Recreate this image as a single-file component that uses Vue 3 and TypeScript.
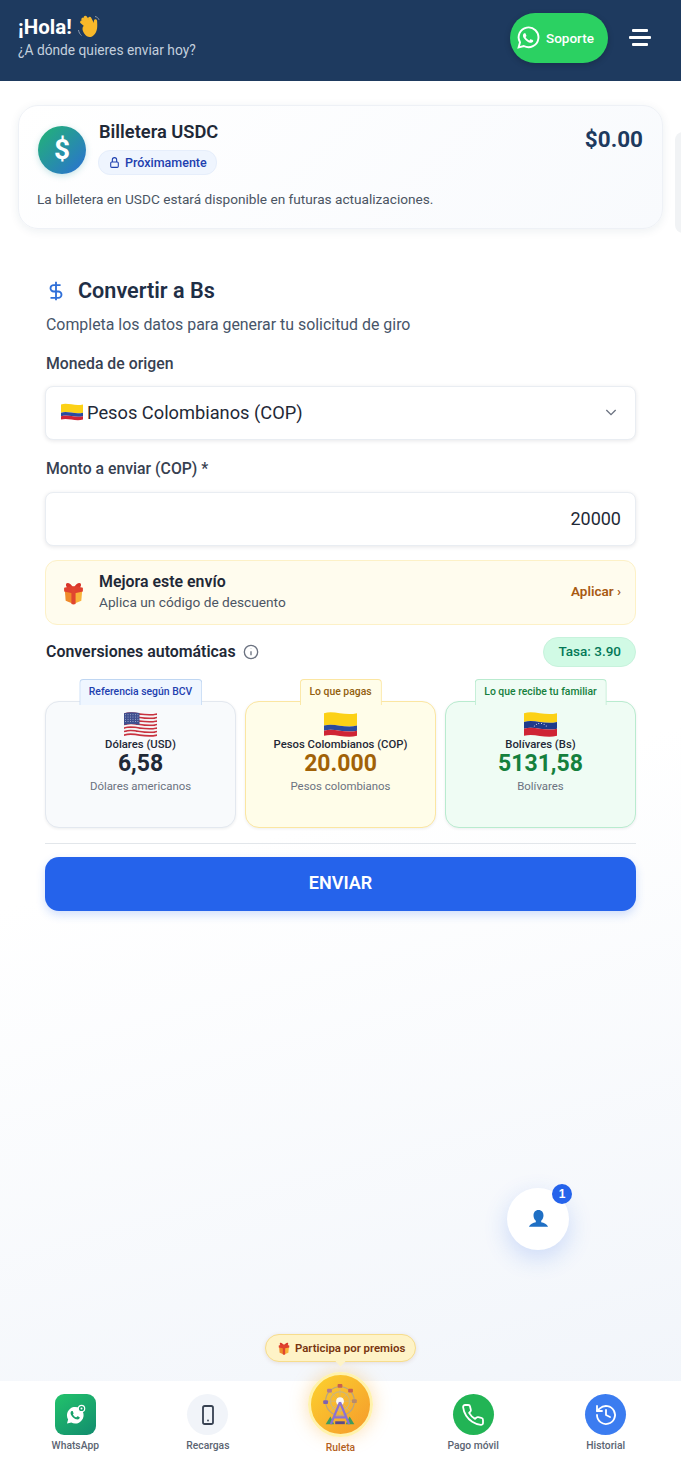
<script setup lang="ts">
import { h } from 'vue'

type FlagCode = 'us' | 'co' | 've'

interface Conversion {
  tab: string
  tone: string
  flag: FlagCode
  label: string
  value: string
  note: string
}

interface NavItem {
  key: string
  label: string
}

const conversions: Conversion[] = [
  { tab: 'Referencia según BCV', tone: 'blue', flag: 'us', label: 'Dólares (USD)', value: '6,58', note: 'Dólares americanos' },
  { tab: 'Lo que pagas', tone: 'yellow', flag: 'co', label: 'Pesos Colombianos (COP)', value: '20.000', note: 'Pesos colombianos' },
  { tab: 'Lo que recibe tu familiar', tone: 'green', flag: 've', label: 'Bolívares (Bs)', value: '5131,58', note: 'Bolívares' },
]

const leftNav: NavItem[] = [
  { key: 'whatsapp', label: 'WhatsApp' },
  { key: 'recargas', label: 'Recargas' },
]

const rightNav: NavItem[] = [
  { key: 'pago', label: 'Pago móvil' },
  { key: 'historial', label: 'Historial' },
]

const waPhone =
  'M17.5 14.4c-.3-.1-1.7-.8-2-.9-.3-.1-.5-.1-.7.1-.2.3-.8.9-.9 1.1-.2.2-.3.2-.6.1-.3-.1-1.2-.5-2.4-1.5-.9-.8-1.5-1.8-1.6-2.1-.2-.3 0-.5.1-.6l.4-.5c.1-.2.2-.3.3-.5.1-.2 0-.4 0-.5-.1-.1-.7-1.6-.9-2.2-.2-.6-.5-.5-.7-.5h-.6c-.2 0-.5.1-.8.4-.3.3-1 1-1 2.5s1.1 2.9 1.2 3.1c.1.2 2.1 3.2 5.1 4.5.7.3 1.3.5 1.7.6.7.2 1.4.2 1.9.1.6-.1 1.700-.7 2-1.400.2-.7.2-1.200.2-1.400-.1-.1-.3-.2-.6-.3z'

// wheel cabins around the rim
const cabins = [
  { x: 24, y: 4, c: '#c8604f' },
  { x: 35, y: 9, c: '#c8604f' },
  { x: 13, y: 9, c: '#b27a8e' },
  { x: 39, y: 20, c: '#b98a6a' },
  { x: 9, y: 21, c: '#7f62b0' },
]

function band(y1: number, y2: number) {
  return `M0 ${y1}C10 ${y1 - 3} 20 ${y1 + 3} 32 ${y1}V${y2}C20 ${y2 + 3} 10 ${y2 - 3} 0 ${y2}Z`
}

function flagBands(code: FlagCode) {
  if (code === 'us') {
    const rows = []
    for (let i = 0; i < 13; i++) {
      rows.push(h('path', { d: band(2 + i * 1.7, 2 + (i + 1) * 1.7), fill: i % 2 ? '#f5f5f5' : '#c8323f' }))
    }
    rows.push(h('path', { d: 'M0 2C5 .6 10 .8 15 1.800V13.400C10 12.400 5 12.200 0 13.400Z', fill: '#3f4f8f' }))
    for (let y = 3.5; y < 12; y += 2.2) {
      for (let x = 1.5; x < 14; x += 2.4) {
        rows.push(h('circle', { cx: x, cy: y, r: 0.45, fill: '#e8ecf6' }))
      }
    }
    return rows
  }
  const mid = code === 'co' ? 14 : 10.5
  const low = code === 'co' ? 19 : 17
  const rows = [
    h('path', { d: band(2, mid), fill: '#fcd116' }),
    h('path', { d: band(mid, low), fill: code === 'co' ? '#2a4a9e' : '#1f3a8a' }),
    h('path', { d: band(low, 24), fill: '#cf2435' }),
  ]
  if (code === 've') {
    const stars: [number, number][] = [[10, 14.4], [12, 12.8], [14.3, 12], [17, 12], [19.5, 12.8], [21.6, 14.4]]
    stars.forEach(([x, y]) => rows.push(h('circle', { cx: x, cy: y, r: 0.5, fill: '#fff' })))
  }
  return rows
}

const FlagIcon = (props: { code: FlagCode }) =>
  h('svg', { viewBox: '0 0 32 26', class: 'flag-svg' }, flagBands(props.code))
FlagIcon.props = ['code']

const GiftIcon = () =>
  h('svg', { viewBox: '0 0 24 24' }, [
    h('path', { d: 'M12 8C9 1.500 3.500 1.500 5 6c.6 1.500 4 2 7 2 3 0 6.400-.5 7-2 1.500-4.500-4-4.500-7 2z', fill: '#d8352a' }),
    h('path', { d: 'M3.500 8 12 10.500V23l-7.500-3z', fill: '#ef8a2a' }),
    h('path', { d: 'M20.500 8 12 10.500V23l7.500-3z', fill: '#f9b23a' }),
    h('path', { d: 'M3 7.500 9 6l6 0 6 1.500V11l-9 2-9-2z', fill: '#e0402f' }),
    h('path', { d: 'M10 8h4v15l-2 .5-2-.5z', fill: '#e0452f' }),
  ])
</script>

<template>
  <div class="page">
    <header class="top">
      <div class="top__hello">
        <h1 class="top__title">
          ¡Hola!
          <svg class="top__wave" viewBox="0 0 24 24">
            <g fill="none" stroke="#f8b82a" stroke-width="3.400" stroke-linecap="round">
              <path d="m13 14-8.200-7" />
              <path d="m14 13-8-8.800" />
              <path d="m15 12-6.600-9.500" />
              <path d="m17 12-4.300-8.500" />
            </g>
            <path fill="#f8b82a" d="M5.800 12c2-3 7-5.500 10.500-3l.7-3.500c.4-1.800 3-1.500 3.100.4.2 4.500 1 10.500-3.700 14.600-3.200 2.700-6.700 1.500-8.800-1.500-1.300-1.800-2.800-4.500-1.800-7z" />
            <path fill="none" stroke="#8f9bb0" stroke-width="1" d="M1.500 15c.4 2.500 1.400 4.200 3 5.500M18 1.500c2 .4 3.300 1.500 4 3.300" />
          </svg>
        </h1>
        <p class="top__sub">¿A dónde quieres enviar hoy?</p>
      </div>
      <a class="top__support">
        <svg class="top__wa" viewBox="0 0 24 24">
          <path
            fill="none"
            stroke="#fff"
            stroke-width="1.900"
            d="M2.600 21.400 4 16.300A9.900 9.900 0 1 1 7.800 20z"
          />
          <path fill="#fff" transform="translate(1.800 1.800) scale(.85)" :d="waPhone" />
        </svg>
        Soporte
      </a>
      <div class="top__menu">
        <span />
        <span class="top__menu-long" />
        <span />
      </div>
    </header>

    <main class="main">
      <div class="wallets">
        <section class="wallet">
          <div class="wallet__head">
            <div class="wallet__coin">$</div>
            <div class="wallet__info">
              <h2 class="wallet__name">Billetera USDC</h2>
              <span class="wallet__badge">
                <svg class="wallet__lock" viewBox="0 0 24 24">
                  <rect x="5" y="11" width="14" height="10" rx="2" />
                  <path d="M8 11V7a4 4 0 0 1 8 0v4" />
                </svg>
                Próximamente
              </span>
            </div>
            <div class="wallet__amount">$0.00</div>
          </div>
          <p class="wallet__desc">La billetera en USDC estará disponible en futuras actualizaciones.</p>
        </section>
        <div class="wallet-next" />
      </div>

      <section class="form">
        <h2 class="form__title">
          <svg class="form__dollar" viewBox="0 0 24 24">
            <path d="M12 2v20M17 5.500H9.500a3.500 3.500 0 0 0 0 7h5a3.500 3.500 0 0 1 0 7H6" />
          </svg>
          Convertir a Bs
        </h2>
        <p class="form__sub">Completa los datos para generar tu solicitud de giro</p>

        <label class="form__label form__label--first">Moneda de origen</label>
        <div class="field field--select">
          <FlagIcon code="co" class="field__flag" />
          <span>Pesos Colombianos (COP)</span>
          <svg class="field__chev" viewBox="0 0 24 24">
            <path d="m5 9 7 7 7-7" />
          </svg>
        </div>

        <label class="form__label">Monto a enviar (COP) *</label>
        <input class="field field--input" value="20000">

        <div class="promo">
          <GiftIcon class="promo__gift" />
          <div class="promo__text">
            <strong>Mejora este envío</strong>
            <span>Aplica un código de descuento</span>
          </div>
          <span class="promo__apply">Aplicar ›</span>
        </div>

        <div class="rates">
          <h3 class="rates__title">Conversiones automáticas</h3>
          <svg class="rates__info" viewBox="0 0 24 24">
            <circle cx="12" cy="12" r="10" />
            <path d="M12 11v6M12 7v.5" />
          </svg>
          <span class="rates__pill">Tasa: 3.90</span>
        </div>

        <div class="cards">
          <article v-for="c in conversions" :key="c.flag" class="conv" :class="`conv--${c.tone}`">
            <span class="conv__tab">{{ c.tab }}</span>
            <FlagIcon :code="c.flag" class="conv__flag" />
            <div class="conv__label">{{ c.label }}</div>
            <div class="conv__value">{{ c.value }}</div>
            <div class="conv__note">{{ c.note }}</div>
          </article>
        </div>

        <hr class="form__line">
        <button class="send" type="button">ENVIAR</button>
      </section>
    </main>

    <button class="chat" type="button">
      <svg class="chat__user" viewBox="0 0 24 24">
        <path d="M12 2c3.400 0 5.200 2.600 5.200 5.700 0 2.300-.9 4.300-2.400 5.600v1.600c2.800.6 6.200 2.200 7.200 4.600H2c1-2.400 4.400-4 7.200-4.600v-1.600C7.700 12 6.800 10 6.800 7.700 6.800 4.600 8.600 2 12 2z" />
      </svg>
      <span class="chat__badge">1</span>
    </button>

    <nav class="nav">
      <div class="nav__hint">
        <GiftIcon class="nav__hint-gift" />
        Participa por premios
      </div>

      <a v-for="n in leftNav" :key="n.key" class="nav__item">
        <span class="nav__icon" :class="`nav__icon--${n.key}`">
          <svg v-if="n.key === 'whatsapp'" viewBox="0 0 24 24" class="nav__svg">
            <path fill="#fff" d="M4 20.500 5.100 16.400A8.300 8.300 0 1 1 8.300 19.500z" />
            <path fill="#16a06a" transform="translate(3 3.200) scale(.75)" :d="waPhone" />
            <circle cx="18.500" cy="5.500" r="3.200" fill="#16a06a" stroke="#fff" stroke-width="1.200" />
            <circle cx="18.500" cy="5.500" r="1" fill="#fff" />
          </svg>
          <svg v-else viewBox="0 0 24 24" class="nav__svg nav__svg--line" stroke="#374151">
            <rect x="7" y="3" width="10" height="18" rx="1.800" />
            <path d="M12 17.500v.1" />
          </svg>
        </span>
        {{ n.label }}
      </a>

      <a class="nav__item nav__item--wheel">
        <span class="wheel">
          <svg viewBox="0 0 48 48" class="wheel__svg">
            <g fill="none">
              <circle cx="24" cy="20" r="15" stroke="#b5a486" stroke-width="1.200" />
              <circle cx="24" cy="20" r="10" stroke="#cdb678" stroke-width="1.400" />
              <path stroke="#c9b48c" stroke-width=".7" d="M24 5v30M9 20h30M13.400 9.400l21.200 21.200M34.600 9.400 13.400 30.600" />
            </g>
            <circle cx="24" cy="20" r="4" fill="#fbfaf5" />
            <rect v-for="(c, i) in cabins" :key="i" :x="c.x - 2.500" :y="c.y - 2" width="5" height="4" rx="1" :fill="c.c" />
            <path fill="#3f9a5e" d="M9 44l5-8 4 8zM30 44l4-8 5 8z" />
            <path fill="none" stroke="#8b72d2" stroke-width="2.400" d="M24 21 14.500 44M24 21l9.500 23M18 37h12" />
            <rect x="19" y="41" width="10" height="3" fill="#5b4a8a" />
          </svg>
        </span>
        Ruleta
      </a>

      <a v-for="n in rightNav" :key="n.key" class="nav__item">
        <span class="nav__icon" :class="`nav__icon--${n.key}`">
          <svg v-if="n.key === 'pago'" viewBox="0 0 24 24" class="nav__svg nav__svg--line" stroke="#fff">
            <path d="M22 16.900v3a2 2 0 0 1-2.200 2 19.800 19.800 0 0 1-8.600-3.100 19.500 19.500 0 0 1-6-6A19.800 19.800 0 0 1 2.100 4.200 2 2 0 0 1 4.100 2h3a2 2 0 0 1 2 1.700c.1 1 .4 1.900.7 2.800a2 2 0 0 1-.5 2.100L8.100 9.900a16 16 0 0 0 6 6l1.300-1.300a2 2 0 0 1 2.100-.4c.9.300 1.800.6 2.800.7a2 2 0 0 1 1.700 2z" />
          </svg>
          <svg v-else viewBox="0 0 24 24" class="nav__svg nav__svg--line" stroke="#fff">
            <path d="M3 12a9 9 0 1 0 2.900-6.600L3 8" />
            <path d="M3 3v5h5M12 7v5l4 2" />
          </svg>
        </span>
        {{ n.label }}
      </a>
    </nav>
  </div>
</template>

<style>
html,
body {
  margin: 0;
  background: #fff;
}
</style>

<style scoped>
.page {
  position: relative;
  width: 681px;
  height: 1467px;
  overflow: hidden;
  display: flex;
  flex-direction: column;
  font-family: Roboto, sans-serif;
  color: #1f2937;
  background: linear-gradient(165deg, #ffffff 55%, #f0f4fa 100%);
}

.flag-svg {
  display: block;
}

/* header */
.top {
  flex: 0 0 81px;
  box-sizing: border-box;
  display: flex;
  align-items: center;
  padding: 0 30px 0 18px;
  background: #1e3a5f;
  color: #fff;
}

.top__hello {
  flex: 1;
  margin-top: -7px;
}

.top__title {
  display: flex;
  align-items: center;
  gap: 5px;
  margin: 0;
  font-size: 20.500px;
  line-height: 26px;
  font-weight: 700;
}

.top__wave {
  width: 24px;
  height: 24px;
}

.top__sub {
  margin: 0;
  font-size: 13.750px;
  line-height: 20px;
  color: #c3cfdd;
}

.top__support {
  display: flex;
  align-items: center;
  gap: 6px;
  box-sizing: border-box;
  width: 98px;
  height: 50px;
  margin: -5px 21px 0 0;
  padding-left: 6px;
  border-radius: 25px;
  background: #2bd162;
  font-size: 13.500px;
  font-weight: 500;
  box-shadow: 0 2px 6px rgba(0, 0, 0, 0.2);
}

.top__wa {
  width: 24px;
  height: 24px;
}

.top__menu {
  display: flex;
  flex-direction: column;
  align-items: center;
  gap: 4px;
  width: 22px;
  margin-top: -6px;
}

.top__menu span {
  width: 16px;
  height: 3px;
  border-radius: 1px;
  background: #fff;
}

.top__menu .top__menu-long {
  width: 22px;
}

/* wallet */
.main {
  flex: 1;
}

.wallets {
  display: flex;
  gap: 12px;
  overflow: hidden;
  padding: 24px 0 14px 18px;
}

.wallet {
  flex: 0 0 645px;
  box-sizing: border-box;
  height: 124px;
  padding: 17px 19px 0 19px;
  border: 1px solid #eef1f6;
  border-radius: 20px;
  background: linear-gradient(135deg, #ffffff, #f8fafd);
  box-shadow: 0 2px 10px rgba(30, 58, 95, 0.08);
}

.wallet-next {
  flex: 0 0 60px;
  height: 101px;
  margin-top: 27px;
  border-radius: 8px;
  background: #f1f3f5;
}

.wallet__head {
  display: flex;
  gap: 13px;
}

.wallet__coin {
  flex: 0 0 48px;
  height: 48px;
  margin-top: 3px;
  border-radius: 50%;
  background: linear-gradient(135deg, #22b573, #2b6fd4);
  color: #fff;
  font-size: 28px;
  line-height: 48px;
  font-weight: 700;
  text-align: center;
  box-shadow: 0 2px 6px rgba(34, 150, 160, 0.25);
}

.wallet__info {
  flex: 1;
}

.wallet__name {
  margin: -2px 0 0;
  font-size: 18.300px;
  line-height: 21px;
  font-weight: 600;
}

.wallet__badge {
  display: inline-flex;
  align-items: center;
  gap: 4px;
  height: 23px;
  margin: 8px 0 0 -1px;
  padding: 0 9px;
  border: 1px solid #e6eefb;
  border-radius: 12px;
  background: #eff5fe;
  color: #1e40af;
  font-size: 12.500px;
  font-weight: 500;
}

.wallet__lock {
  width: 13px;
  height: 13px;
  fill: none;
  stroke: #1e40af;
  stroke-width: 2;
}

.wallet__amount {
  margin-top: 2px;
  color: #1e3a5f;
  font-size: 22.500px;
  line-height: 28px;
  font-weight: 700;
}

.wallet__desc {
  margin: 14px 0 0 -1px;
  color: #4b5563;
  font-size: 13.650px;
  line-height: 20px;
}

/* form */
.form {
  padding: 30px 45px 0 45px;
}

.form__title {
  display: flex;
  align-items: center;
  gap: 11px;
  margin: 0;
  font-size: 21.600px;
  line-height: 28px;
  font-weight: 600;
  color: #1f2f46;
}

.form__dollar {
  width: 22px;
  height: 22px;
  fill: none;
  stroke: #2f6fd8;
  stroke-width: 2;
}

.form__sub {
  margin: 10px 0 0 1px;
  color: #475569;
  font-size: 15.900px;
  line-height: 20px;
}

.form__label {
  display: block;
  margin: 19px 0 13px 1px;
  color: #374151;
  font-size: 15.800px;
  line-height: 20px;
  font-weight: 500;
}

.form__label--first {
  margin-top: 19px;
  margin-bottom: 14px;
}

.field {
  box-sizing: border-box;
  width: 100%;
  height: 54px;
  border: 1px solid #e9edf2;
  border-radius: 8px;
  background: #fff;
  color: #1f2937;
  font-family: inherit;
  font-size: 18px;
  box-shadow: 0 1px 4px rgba(15, 23, 42, 0.1);
}

.field--select {
  display: flex;
  align-items: center;
  gap: 4px;
  margin-top: -2px;
  padding: 0 16px 2px 15px;
  font-size: 18.250px;
}

.field--input {
  display: block;
  padding: 0 14px 2px;
  text-align: right;
  outline: none;
}

.field__flag {
  width: 22px;
  height: 18px;
}

.field__chev {
  width: 16px;
  height: 16px;
  margin-left: auto;
  fill: none;
  stroke: #6b7280;
  stroke-width: 2;
}

.promo {
  display: flex;
  align-items: center;
  gap: 13px;
  box-sizing: border-box;
  height: 65px;
  margin-top: 14px;
  padding: 0 14px 3px 15px;
  border: 1px solid #fdf1c7;
  border-radius: 12px;
  background: #fffcee;
}

.promo__gift {
  width: 25px;
  height: 25px;
  margin-top: 3px;
}

.promo__text {
  flex: 1;
  display: flex;
  flex-direction: column;
  gap: 1px;
}

.promo__text strong {
  font-size: 15.900px;
  line-height: 20px;
  font-weight: 600;
}

.promo__text span {
  color: #4b5563;
  font-size: 13.700px;
  line-height: 18px;
}

.promo__apply {
  color: #a85a12;
  font-size: 13.500px;
  font-weight: 600;
}

.rates {
  display: flex;
  align-items: center;
  gap: 7px;
  height: 30px;
  margin-top: 12px;
}

.rates__title {
  margin: 0 0 2px 1px;
  font-size: 15.900px;
  font-weight: 600;
  color: #1f2937;
}

.rates__info {
  width: 16px;
  height: 16px;
  fill: none;
  stroke: #6b7280;
  stroke-width: 2;
}

.rates__pill {
  margin-left: auto;
  display: flex;
  align-items: center;
  box-sizing: border-box;
  height: 30px;
  padding: 0 14px 2px;
  border: 1px solid #c7f2dc;
  border-radius: 15px;
  background: #d1fae5;
  color: #047857;
  font-size: 13.500px;
  font-weight: 500;
}

.cards {
  display: grid;
  grid-template-columns: repeat(3, 191px);
  gap: 9px;
  margin-top: 34px;
}

.conv {
  position: relative;
  box-sizing: border-box;
  height: 127px;
  padding-top: 9px;
  border: 1px solid;
  border-radius: 14px;
  text-align: center;
  box-shadow: 0 1px 3px rgba(15, 23, 42, 0.07);
}

.conv__tab {
  position: absolute;
  top: -23px;
  left: 50%;
  transform: translateX(-50%);
  box-sizing: border-box;
  height: 26px;
  padding: 0 9px;
  border: 1px solid;
  border-bottom-width: 0;
  border-radius: 4px 4px 0 0;
  font-size: 10.400px;
  line-height: 23px;
  font-weight: 500;
  white-space: nowrap;
}

.conv--blue {
  border-color: #e3e8ef;
  background: #f8fafc;
}

.conv--blue .conv__tab {
  border-color: #bfd6f2;
  background: #eff6ff;
  color: #1e40af;
}

.conv--yellow {
  border-color: #fbe6a2;
  background: #fffde9;
}

.conv--yellow .conv__tab {
  border-color: #fbe6a2;
  background: #fffde9;
  color: #92600e;
}

.conv--yellow .conv__value {
  color: #a16207;
}

.conv--green {
  border-color: #b9ebcf;
  background: #effcf4;
}

.conv--green .conv__tab {
  border-color: #b9ebcf;
  background: #effcf4;
  color: #15803d;
}

.conv--green .conv__value {
  color: #15803d;
}

.conv__flag {
  width: 33px;
  height: 27px;
  margin: 0 auto;
}

.conv__label {
  font-size: 11.300px;
  line-height: 14px;
  font-weight: 500;
  color: #1f2937;
}

.conv__value {
  color: #1f2937;
  font-size: 23px;
  line-height: 23px;
  font-weight: 700;
}

.conv__note {
  margin-top: 2px;
  color: #6b7280;
  font-size: 11.400px;
  line-height: 18px;
}

.form__line {
  height: 1px;
  margin: 15px 0 13px;
  border: 0;
  background: #e2e6ea;
}

.send {
  display: block;
  width: 100%;
  height: 54px;
  padding: 0 0 3px;
  border: 0;
  border-radius: 14px;
  background: #2563eb;
  color: #fff;
  font-family: inherit;
  font-size: 18px;
  font-weight: 600;
  box-shadow: 0 4px 10px rgba(37, 99, 235, 0.2);
}

/* floating chat */
.chat {
  position: absolute;
  left: 507px;
  top: 1188px;
  width: 62px;
  height: 62px;
  padding: 0;
  border: 0;
  border-radius: 50%;
  background: #fff;
  box-shadow: 0 8px 24px rgba(37, 99, 235, 0.2);
}

.chat__user {
  display: block;
  width: 23px;
  height: 23px;
  margin: 0 auto;
  fill: #1f6fc4;
}

.chat__badge {
  position: absolute;
  right: -3px;
  top: -4px;
  width: 20px;
  height: 20px;
  border-radius: 50%;
  background: #2563eb;
  color: #fff;
  font-family: inherit;
  font-size: 12px;
  line-height: 20px;
  font-weight: 700;
}

/* bottom nav */
.nav {
  position: relative;
  flex: 0 0 86px;
  display: grid;
  grid-template-columns: repeat(5, 132.600px);
  padding: 0 9px;
  background: #fff;
}

.nav__item {
  display: flex;
  flex-direction: column;
  align-items: center;
  gap: 4px;
  padding-top: 13px;
  color: #5b6472;
  font-size: 10.300px;
  line-height: 14px;
  font-weight: 500;
}

.nav__icon {
  width: 41px;
  height: 41px;
  display: flex;
  align-items: center;
  justify-content: center;
  border-radius: 50%;
}

.nav__icon--whatsapp {
  border-radius: 9px;
  background: linear-gradient(145deg, #22c36b, #128c6e);
}

.nav__icon--recargas {
  background: #f1f4f9;
}

.nav__icon--pago {
  background: #22b455;
}

.nav__icon--historial {
  background: #3b7cf0;
}

.nav__svg {
  width: 24px;
  height: 24px;
}

.nav__svg--line {
  fill: none;
  stroke-width: 1.800;
  stroke-linecap: round;
  stroke-linejoin: round;
}

.nav__item--wheel {
  color: #b45f1c;
  gap: 4px;
  padding-top: 0;
}

.wheel {
  flex: none;
  display: flex;
  align-items: center;
  justify-content: center;
  box-sizing: border-box;
  width: 65px;
  height: 65px;
  margin-top: -9px;
  border: 3px solid #fff2ac;
  border-radius: 50%;
  background: linear-gradient(135deg, #fcd22e, #f59a2c);
  box-shadow: 0 0 18px rgba(251, 176, 59, 0.4);
}

.wheel__svg {
  width: 46px;
  height: 46px;
}

.nav__hint {
  position: absolute;
  left: 265px;
  top: -47px;
  z-index: 1;
  display: flex;
  align-items: center;
  gap: 4px;
  box-sizing: border-box;
  width: 151px;
  height: 28px;
  padding-left: 11px;
  border: 1px solid #f7dd8c;
  border-radius: 14px;
  background: #fef3c7;
  color: #78350f;
  font-size: 11.400px;
  font-weight: 600;
  white-space: nowrap;
  box-shadow: 0 1px 4px rgba(120, 53, 15, 0.12);
}

.nav__hint::after {
  content: '';
  position: absolute;
  left: 71px;
  bottom: -4px;
  width: 7px;
  height: 7px;
  transform: rotate(45deg);
  background: #fef3c7;
  z-index: -1;
}

.nav__hint-gift {
  width: 14px;
  height: 14px;
}
</style>
